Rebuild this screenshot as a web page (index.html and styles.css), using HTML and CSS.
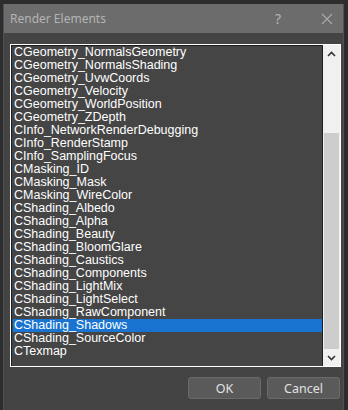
FILE: index.html
```html
<!DOCTYPE html>
<html lang="en">
<head>
    <meta charset="UTF-8">
    <title>Render Elements</title>
    <link rel="stylesheet" href="styles.css">
</head>
<body>
    <div class="dialog">
        <div class="titlebar">
            <span class="title">Render Elements</span>
            <span class="help">?</span>
            <span class="close">
                <svg width="12" height="12" viewBox="0 0 12 12"><path d="M1 1 L11 11 M11 1 L1 11" stroke="#a8a8a8" stroke-width="1.2" fill="none"/></svg>
            </span>
        </div>

        <!-- element list -->
        <div class="listbox">
            <ul class="items">
                <li>CGeometry_NormalsGeometry</li>
                <li>CGeometry_NormalsShading</li>
                <li>CGeometry_UvwCoords</li>
                <li>CGeometry_Velocity</li>
                <li>CGeometry_WorldPosition</li>
                <li>CGeometry_ZDepth</li>
                <li>CInfo_NetworkRenderDebugging</li>
                <li>CInfo_RenderStamp</li>
                <li>CInfo_SamplingFocus</li>
                <li>CMasking_ID</li>
                <li>CMasking_Mask</li>
                <li>CMasking_WireColor</li>
                <li>CShading_Albedo</li>
                <li>CShading_Alpha</li>
                <li>CShading_Beauty</li>
                <li>CShading_BloomGlare</li>
                <li>CShading_Caustics</li>
                <li>CShading_Components</li>
                <li>CShading_LightMix</li>
                <li>CShading_LightSelect</li>
                <li>CShading_RawComponent</li>
                <li class="selected">CShading_Shadows</li>
                <li>CShading_SourceColor</li>
                <li>CTexmap</li>
            </ul>
            <div class="scrollbar">
                <div class="arrow">
                    <svg width="9" height="6" viewBox="0 0 9 6"><path d="M1 5 L4.5 1.5 L8 5" stroke="#333" stroke-width="1.6" fill="none"/></svg>
                </div>
                <div class="track"><div class="thumb"></div></div>
                <div class="arrow">
                    <svg width="9" height="6" viewBox="0 0 9 6"><path d="M1 1 L4.5 4.5 L8 1" stroke="#333" stroke-width="1.6" fill="none"/></svg>
                </div>
            </div>
        </div>

        <div class="buttons">
            <button type="button">OK</button>
            <button type="button">Cancel</button>
        </div>
    </div>
</body>
</html>
```

FILE: styles.css
```css
body {
    margin: 0;
    background-color: #2d2d2d;
    font-family: "Liberation Sans", Arial, sans-serif;
}
.dialog {
    margin: 4px 4px 0 3px;
    height: 406px;
    background-color: #444444;
    border-left: 1px solid #515151;
    border-right: 1px solid #515151;
}
.titlebar {
    height: 29px;
    background-color: #6c6c6c;
    display: flex;
    align-items: center;
    padding-left: 6px;
    color: #b4b4b4;
    font-family: "Noto Sans", sans-serif;
    font-size: 12px;
}
.title {
    flex: 1;
}
.help {
    width: 46px;
    font-size: 14px;
}
.close {
    width: 22px;
    display: flex;
}
.listbox {
    margin: 11px 2px 0 6px;
    height: 321px;
    border: 1px solid #ffffff;
    display: flex;
}
.items {
    flex: 1;
    margin: 0;
    padding: 0 0 0 1px;
    list-style: none;
    background-color: #454545;
    border-top: 1px solid #1e1e1e;
    border-left: 1px solid #1e1e1e;
    color: #ffffff;
    font-size: 12.5px;
}
.items li {
    height: 13px;
    line-height: 13px;
    padding-left: 1px;
    white-space: nowrap;
}
.items li.selected {
    background-color: #1874d0;
}
.scrollbar {
    width: 17px;
    background-color: #f0f0f0;
    border-left: 1px solid #1e1e1e;
    display: flex;
    flex-direction: column;
}
.arrow {
    height: 17px;
    display: flex;
    align-items: center;
    justify-content: center;
}
.track {
    flex: 1;
    display: flex;
    flex-direction: column;
    justify-content: flex-end;
    padding: 0 1px;
}
.thumb {
    height: 216px;
    background-color: #cdcdcd;
}
.buttons {
    display: flex;
    justify-content: flex-end;
    gap: 6px;
    padding: 10px 3px 0 0;
}
.buttons button {
    width: 73px;
    height: 22px;
    background-color: #5a5a5a;
    border: 1px solid #6a6a6a;
    border-radius: 3px;
    color: #e2e2e2;
    font-family: "Noto Sans", sans-serif;
    font-size: 12.5px;
}
```
